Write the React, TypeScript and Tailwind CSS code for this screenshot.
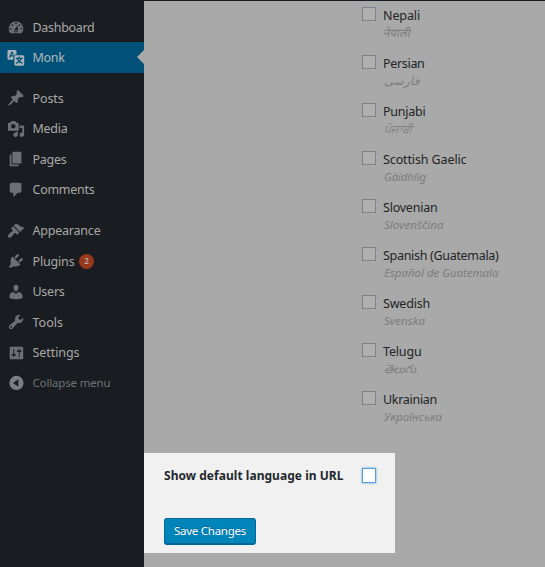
import { useLayoutEffect, useRef, type ReactNode } from "react";

/** Spreads its letters so that the text takes exactly `width` pixels. */
function FitText({ text, width, className = "" }: { text: string; width?: number; className?: string }) {
  const ref = useRef<HTMLSpanElement>(null);
  useLayoutEffect(() => {
    const el = ref.current;
    if (!el || !width) return;
    el.style.letterSpacing = "0px";
    const natural = el.getBoundingClientRect().width;
    el.style.letterSpacing = `${(width - natural) / text.length}px`;
  }, [text, width]);
  return (
    <span ref={ref} className={`inline-block whitespace-nowrap ${className}`}>
      {text}
    </span>
  );
}

function Icon({ d, children }: { d?: string; children?: ReactNode }) {
  return (
    <svg viewBox="0 0 20 20" className="size-[18px] shrink-0" fill="currentColor" fillRule="evenodd">
      {d ? <path d={d} /> : children}
    </svg>
  );
}

const icons = {
  dashboard:
    "M3.76 17h12.48A7.998 7.998 0 0 0 10 4a7.998 7.998 0 0 0-6.24 13zM10 5c.55 0 1 .45 1 1s-.45 1-1 1-1-.45-1-1 .45-1 1-1zM6 7c.55 0 1 .45 1 1s-.45 1-1 1-1-.45-1-1 .45-1 1-1zm8 0c.55 0 1 .45 1 1s-.45 1-1 1-1-.45-1-1 .45-1 1-1zm-5.37 5.55L12 8v6c0 1.1-.9 2-2 2s-2-.9-2-2c0-.57.24-1.08.63-1.45zM4 11c.55 0 1 .45 1 1s-.45 1-1 1-1-.45-1-1 .45-1 1-1zm12 0c.55 0 1 .45 1 1s-.45 1-1 1-1-.45-1-1 .45-1 1-1zm-5 3c0-.55-.45-1-1-1s-1 .45-1 1 .45 1 1 1 1-.45 1-1z",
  posts:
    "M10.44 3.02l1.82-1.82 6.36 6.35-1.83 1.82c-1.05-.68-2.48-.57-3.41.36l-.75.75c-.92.93-1.04 2.35-.35 3.41l-1.83 1.82-2.41-2.41-2.8 2.79c-.42.42-3.38 2.71-3.8 2.29s1.86-3.39 2.28-3.81l2.79-2.79L4.1 9.36l1.83-1.82c1.05.69 2.48.57 3.4-.36l.75-.75c.93-.92 1.05-2.35.36-3.41z",
  media:
    "M13 11V4c0-.55-.45-1-1-1h-1.67L9 1H5L3.67 3H2c-.55 0-1 .45-1 1v7c0 .55.45 1 1 1h10c.55 0 1-.45 1-1zM7 4.5c1.38 0 2.5 1.12 2.5 2.5S8.38 9.5 7 9.5 4.5 8.38 4.5 7 5.62 4.5 7 4.5zM14 6h5v10.5c0 1.38-1.12 2.5-2.5 2.5S14 17.88 14 16.5s1.12-2.5 2.5-2.5c.17 0 .34.02.5.05V9h-3V6zm-4 8.05V13h2v3.5c0 1.38-1.12 2.5-2.5 2.5S7 17.88 7 16.5 8.12 14 9.5 14c.17 0 .34.02.5.05z",
  pages: "M6 15V2h10v13H6zm-1 1h8v2H3V5h2v11z",
  comments:
    "M5 2h9c1.1 0 2 .9 2 2v7c0 1.1-.9 2-2 2h-2l-5 5v-5H5c-1.1 0-2-.9-2-2V4c0-1.1.9-2 2-2z",
  appearance:
    "M14.48 11.06L7.41 3.99l1.5-1.5c.5-.56 2.3-.47 3.51.32 1.21.8 1.43 1.28 2.91 2.1 1.18.64 2.45 1.26 4.45.85zm-.71.71L6.7 4.7 4.93 6.47c-.39.39-.39 1.02 0 1.41l1.06 1.06c.39.39.39 1.03 0 1.42-.6.6-1.43 1.11-2.21 1.69-.35.26-.7.53-1.01.84C1.43 14.23.4 16.08 1.4 17.07c.99 1 2.84-.03 4.18-1.36.31-.31.58-.66.85-1.02.57-.78 1.08-1.61 1.69-2.21.39-.39 1.02-.39 1.41 0l1.06 1.06c.39.39 1.02.39 1.41 0z",
  plugins:
    "M13.11 4.36L9.87 7.6 8 5.73l3.24-3.24c.35-.34 1.05-.2 1.56.32.52.51.66 1.21.31 1.55zm-8 1.77l.91-1.12 9.01 9.01-1.19.84c-.71.71-2.63 1.16-3.82 1.16H6.14L4.9 17.26c-.59.59-1.54.59-2.12 0-.59-.58-.59-1.53 0-2.12l1.24-1.24v-3.88c0-1.13.4-3.19 1.09-3.89zm7.26 3.97l3.24-3.24c.34-.35 1.04-.21 1.55.31.52.51.66 1.21.31 1.55l-3.24 3.25z",
  users:
    "M10 9.25c-2.27 0-2.73-3.44-2.73-3.44C7 4.02 7.82 2 9.97 2c2.16 0 2.98 2.02 2.71 3.81 0 0-.41 3.44-2.68 3.44zm0 2.57L12.72 10c2.39 0 4.52 2.33 4.52 4.53v2.49s-3.65 1.13-7.24 1.13c-3.65 0-7.24-1.13-7.24-1.13v-2.49c0-2.25 1.94-4.48 4.47-4.48z",
  tools:
    "M16.68 9.77c-1.34 1.34-3.3 1.67-4.95.99l-5.41 6.52c-.99.99-2.59.99-3.58 0s-.99-2.59 0-3.57l6.52-5.42c-.68-1.65-.35-3.61.99-4.95 1.28-1.28 3.12-1.62 4.72-1.06l-2.89 2.89 2.82 2.82 2.86-2.87c.53 1.58.18 3.39-1.08 4.65zM3.81 16.21c.4.39 1.04.39 1.43 0 .4-.4.4-1.04 0-1.43-.39-.4-1.03-.4-1.43 0-.39.39-.39 1.03 0 1.43z",
  settings:
    "M18 16V4c0-.55-.45-1-1-1H4c-.55 0-1 .45-1 1v12c0 .55.45 1 1 1h13c.55 0 1-.45 1-1zM8 11h1c.55 0 1 .45 1 1s-.45 1-1 1H8v1.5c0 .28-.22.5-.5.5s-.5-.22-.5-.5V13H6c-.55 0-1-.45-1-1s.45-1 1-1h1V5.5c0-.28.22-.5.5-.5s.5.22.5.5V11zm5-2h-1c-.55 0-1-.45-1-1s.45-1 1-1h1V5.5c0-.28.22-.5.5-.5s.5.22.5.5V7h1c.55 0 1 .45 1 1s-.45 1-1 1h-1v5.5c0 .28-.22.5-.5.5s-.5-.22-.5-.5V9z",
  collapse:
    "M10.500 2a7.900 7.900 0 1 0 0 15.800 7.900 7.900 0 0 0 0-15.800zM12.600 5.800v8.400L6.700 10z",
};

type Item = { label: string; width: number; icon: string; h: string; badge?: string };

const groupTwo: Item[] = [
  { label: "Posts", width: 31, icon: icons.posts, h: "h-[30px]" },
  { label: "Media", width: 35, icon: icons.media, h: "h-[31px]" },
  { label: "Pages", width: 34, icon: icons.pages, h: "h-[30px]" },
  { label: "Comments", width: 62, icon: icons.comments, h: "h-[31px]" },
];

const groupThree: Item[] = [
  { label: "Appearance", width: 68, icon: icons.appearance, h: "h-[31px]" },
  { label: "Plugins", width: 42, icon: icons.plugins, h: "h-[30px]", badge: "2" },
  { label: "Users", width: 32, icon: icons.users, h: "h-[31px]" },
  { label: "Tools", width: 30.5, icon: icons.tools, h: "h-[30px]" },
  { label: "Settings", width: 47, icon: icons.settings, h: "h-[31px]" },
];

function MenuRow({ item }: { item: Item }) {
  return (
    <li className={`flex items-center pl-[7px] text-[#6c7074] ${item.h}`}>
      <Icon d={item.icon} />
      <FitText text={item.label} width={item.width} className="ml-[7.5px] pt-0.5 text-[12.5px] text-[#a9a9a9]" />
      {item.badge && (
        <span className="ml-[4.5px] flex size-[15px] items-center justify-center rounded-full bg-[#97381a] text-[8px] font-semibold leading-none text-[#b4b0ae]">
          {item.badge}
        </span>
      )}
    </li>
  );
}

const languages: { name: string; width: number; native: string; nativeWidth?: number; slanted?: boolean }[] = [
  { name: "Nepali", width: 37, native: "नेपाली", slanted: true },
  { name: "Persian", width: 41.5, native: "فارسی" },
  { name: "Punjabi", width: 42.5, native: "ਪੰਜਾਬੀ" },
  { name: "Scottish Gaelic", width: 83.5, native: "Gàidhlig", nativeWidth: 42 },
  { name: "Slovenian", width: 54.5, native: "Slovenščina", nativeWidth: 59.5 },
  { name: "Spanish (Guatemala)", width: 115.5, native: "Español de Guatemala", nativeWidth: 114.5 },
  { name: "Swedish", width: 47, native: "Svenska", nativeWidth: 41 },
  { name: "Telugu", width: 38.5, native: "తెలుగు" },
  { name: "Ukrainian", width: 54, native: "Українська", nativeWidth: 58 },
];

export default function App() {
  return (
    <div className="flex h-[567px] w-[545px] flex-col overflow-hidden bg-[#a9a9a9] font-['Noto_Sans','Open_Sans','DejaVu_Sans',sans-serif] leading-none">
      <div className="h-px shrink-0 bg-[#191c20]" />
      <div className="flex min-h-0 flex-1">
        <nav className="w-36 shrink-0 bg-[#191c20] pt-[11px]">
          <ul>
            <MenuRow item={{ label: "Dashboard", width: 62, icon: icons.dashboard, h: "h-[30px]" }} />
            <li className="relative flex h-[31px] items-center bg-[#005078] pl-[7px] text-[#a9b3b8]">
              <Icon>
                <path d="M2 1h7c.8 0 1.500.6 1.500 1.500V6h-1C8.100 6 7 7.100 7 8.400V12H2C1.200 12 .5 11.400.500 10.500v-8C.5 1.600 1.200 1 2 1zM4.700 3 2.300 9.500h1.500l.4-1.300h2.300L6.400 6.800H4.600l.9-2.300.7 1.800h1.500L6.400 3z" />
                <path d="M9.800 7h7.700c.9 0 1.600.7 1.600 1.600v8.300c0 .9-.7 1.600-1.600 1.600H9.800c-.9 0-1.600-.7-1.600-1.600V8.600C8.200 7.700 8.900 7 9.800 7zm3.100 1.500v1.300H9.800v1.400h1.200c.3 1 .8 1.900 1.400 2.600-.8.6-1.700 1-2.700 1.300l.6 1.400c1.300-.4 2.400-1 3.400-1.800.9.800 2.100 1.400 3.300 1.800l.6-1.400c-1.100-.3-2-.7-2.800-1.300.7-.7 1.100-1.600 1.400-2.600h1.300V9.800h-3.100V8.500zm-.4 2.700h2.300c-.2.600-.6 1.200-1.100 1.700-.5-.5-.9-1.100-1.200-1.700z" />
              </Icon>
              <FitText text="Monk" width={32} className="ml-[7.5px] pt-0.5 text-[12.5px] text-[#b3b8bb]" />
              <span className="absolute right-0 top-2 border-y-[7.5px] border-r-[7px] border-y-transparent border-r-[#a9a9a9]" />
            </li>
          </ul>
          <ul className="mt-2.5">
            {groupTwo.map((item) => (
              <MenuRow key={item.label} item={item} />
            ))}
          </ul>
          <ul className="mt-2.5">
            {groupThree.map((item) => (
              <MenuRow key={item.label} item={item} />
            ))}
            <li className="flex h-[30px] items-center pl-[7px] text-[#7b7f82]">
              <Icon d={icons.collapse} />
              <FitText text="Collapse menu" width={78} className="ml-[7.5px] text-[11.5px] text-[#707376]" />
            </li>
          </ul>
        </nav>

        <main className="flex flex-1 flex-col">
          <ul className="h-[452px] shrink-0 pl-[218px] pt-1.5">
            {languages.map((lang) => (
              <li key={lang.name} className="flex h-12">
                <span className="size-3.5 shrink-0 border border-[#7d8285] bg-[#b0b0b0]" />
                <div className="ml-[7px]">
                  <div className="flex h-[18px] items-center pt-px">
                    <FitText text={lang.name} width={lang.width} className="text-[12.5px] text-[#222425]" />
                  </div>
                  <div className="flex h-[15px] items-center pl-px">
                    <FitText
                      text={lang.native}
                      width={lang.nativeWidth}
                      className={`text-[11.5px] italic text-[#7c7c7c] ${lang.slanted ? "-skew-x-12" : ""}`}
                    />
                  </div>
                </div>
              </li>
            ))}
          </ul>
          <section className="flex h-[100px] w-[251px] flex-col items-start bg-[#f1f1f1] pl-5 pt-3.5">
            <div className="flex h-[17px] items-center">
              <FitText
                text="Show default language in URL"
                width={179.5}
                className="text-[12px] font-bold text-[#23282d]"
              />
              <span className="ml-[18px] h-[15px] w-3.5 border border-[#5b9dd9] bg-white shadow-[0_0_2px_rgba(30,140,190,0.8)]" />
            </div>
            <button className="mt-[34px] flex h-[27px] w-[92px] items-center justify-center rounded-[3px] border border-b-2 border-[#006799] bg-[#0085ba] text-white">
              <FitText text="Save Changes" width={72} className="text-[11.5px] [text-shadow:0_-1px_1px_#006799]" />
            </button>
          </section>
        </main>
      </div>
    </div>
  );
}
